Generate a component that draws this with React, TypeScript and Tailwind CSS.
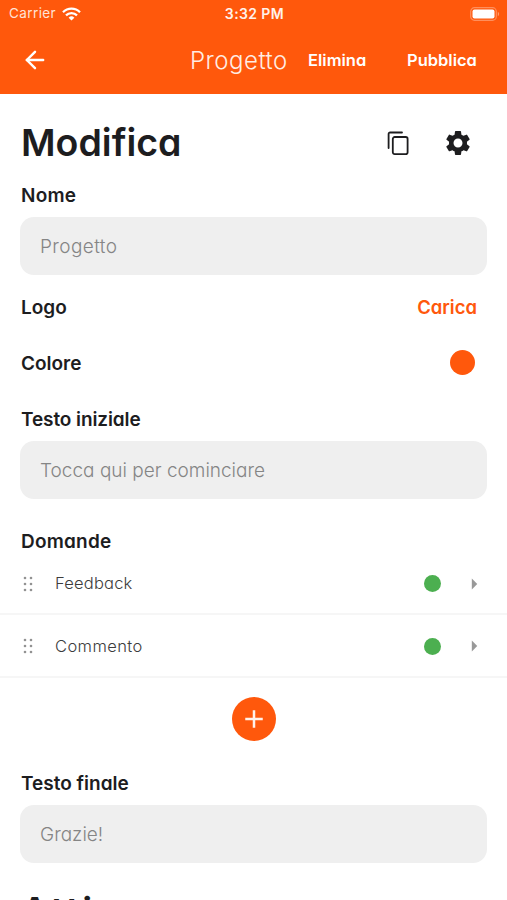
import { ArrowLeft } from 'lucide-react';
import { MdAdd, MdArrowRight, MdSettings } from 'react-icons/md';

interface Question {
  id: number;
  name: string;
  tracking: string;
}

const questions: Question[] = [
  { id: 1, name: 'Feedback', tracking: 'tracking-[0.2px]' },
  { id: 2, name: 'Commento', tracking: 'tracking-[0.4px]' },
];

const StatusBar: React.FC = () => {
  return (
    <div className="grid h-[27px] grid-cols-3 items-center pl-[9px] pr-[7px] text-[13.5px] text-white">
      <div className="flex items-center gap-[6px]">
        <span className="tracking-[0.4px] text-[#ffe3d6] [font-feature-settings:normal]">Carrier</span>
        <svg width="19" height="14" viewBox="0 0 19 14" fill="none" stroke="white" strokeWidth="2.3">
          <path d="M1 5.2a12 12 0 0 1 17 0" />
          <path d="M4 8.4a7.8 7.8 0 0 1 11 0" />
          <path d="M9.5 13.6L6.6 10.7a4.1 4.1 0 0 1 5.8 0z" fill="white" stroke="none" />
        </svg>
      </div>
      <span className="whitespace-nowrap text-center text-[14px] font-semibold tracking-[0.4px] text-[#fff1ea]">3:32 PM</span>
      <svg className="justify-self-end" width="30" height="14" viewBox="0 0 30 14">
        <rect x="0.7" y="0.7" width="25.6" height="12.6" rx="3.8" fill="none" stroke="#ff8f5c" strokeWidth="1.2" />
        <rect x="2.5" y="2.5" width="22" height="9" rx="2" fill="white" />
        <path d="M27.8 4.8c1.8.8 1.8 3.6 0 4.4z" fill="#ff9c6f" />
      </svg>
    </div>
  );
};

const CopyIcon: React.FC = () => {
  return (
    <svg
      className="mr-[34px]"
      width="22"
      height="25"
      viewBox="0 0 22 25"
      fill="none"
      stroke="currentColor"
      strokeWidth="1.8"
      strokeLinecap="round"
      strokeLinejoin="round"
    >
      <path d="M1.6 17V3a1.5 1.5 0 0 1 1.5-1.5H15" />
      <rect x="5.8" y="6" width="14.8" height="17.2" rx="1.9" />
    </svg>
  );
};

const DragHandle: React.FC = () => {
  return (
    <svg width="10" height="16" viewBox="0 0 10 16" fill="#929292">
      {[2, 8, 14].map((y) => (
        <g key={y}>
          <circle cx="2" cy={y} r="1.3" />
          <circle cx="8" cy={y} r="1.3" />
        </g>
      ))}
    </svg>
  );
};

const Field: React.FC<{ children: React.ReactNode }> = ({ children }) => {
  return (
    <div className="mx-5 flex h-[58px] items-center rounded-[14px] bg-[#efefef] px-5 pt-[3px] text-[19px] font-light text-[#858585]">
      {children}
    </div>
  );
};

const App: React.FC = () => {
  return (
    <div className="h-[900px] w-[507px] overflow-hidden bg-white font-['Inter','Open_Sans',sans-serif] text-[#1d1d1f] [font-feature-settings:'cv11']">
      <header className="h-[93.5px] bg-[#ff580c] text-white">
        <StatusBar />
        <div className="flex h-[66px] items-center pl-[21px]">
          <ArrowLeft size={28} strokeWidth={2.1} />
          <h1 className="ml-[141px] w-[98px] whitespace-nowrap pt-[2px] text-[24px] font-light tracking-[0.5px] text-[#ffede4]">Progetto</h1>
          <button className="ml-[20px] w-[59px] whitespace-nowrap text-left text-[16.5px] font-semibold">Elimina</button>
          <button className="ml-[40px] whitespace-nowrap text-[16.5px] font-semibold">Pubblica</button>
        </div>
      </header>

      <main>
        <div className="flex h-[86px] items-center pl-[21px] pr-[34px] pt-[13px]">
          <h2 className="flex-1 text-[37.5px] font-[560]">Modifica</h2>
          <CopyIcon />
          <MdSettings className="size-[30px]" />
        </div>
        <h3 className="flex h-[37px] items-center px-[21px] pb-[4px] text-[19px] font-semibold tracking-[0.2px]">Nome</h3>
        <Field><span className="tracking-[0.4px]">Progetto</span></Field>

        <div className="flex h-[60px] items-center justify-between pl-[21px] pr-[30px] pt-[7px] text-[19px] font-semibold">
          <h3>Logo</h3>
          <button className="text-[18.5px] text-[#ff580c]">Carica</button>
        </div>
        <div className="flex h-[56px] items-center justify-between pl-[21px] pr-8 text-[19px] font-semibold">
          <h3 className="pt-[3px]">Colore</h3>
          <span className="size-[25px] rounded-full bg-[#ff580c]" />
        </div>
        <h3 className="flex h-[50.5px] items-center px-[21px] pt-[8px] text-[19px] font-semibold tracking-[-0.1px]">Testo iniziale</h3>
        <Field>Tocca qui per cominciare</Field>

        <h3 className="flex h-[53.5px] items-end px-[21px] text-[19px] font-semibold leading-[22px] tracking-[0.2px]">Domande</h3>
        <ul>
          {questions.map((question) => (
            <li
              key={question.id}
              className="flex h-[62.5px] items-center border-b-2 border-[#f6f6f6] pl-[23px] pr-[20px] pt-[2px] text-[16.5px] font-light text-[#3c3c3c]"
            >
              <DragHandle />
              <span className={`ml-[22px] flex-1 ${question.tracking}`}>{question.name}</span>
              <span className="mr-[20px] size-[17px] rounded-full bg-[#4caf50]" />
              <MdArrowRight className="size-[26px] text-[#999]" />
            </li>
          ))}
        </ul>
        <div className="flex h-[83px] items-center justify-center">
          <button className="flex size-[44px] items-center justify-center rounded-full bg-[#ff580c] text-[#fff1ea]">
            <MdAdd className="size-[30px]" />
          </button>
        </div>
        <h3 className="flex h-[44px] items-center px-[21px] pt-[3px] text-[19px] font-semibold">Testo finale</h3>
        <Field>Grazie!</Field>
        <h2 className="px-[21px] pt-[20px] text-[38px] font-semibold tracking-[3px]">Atti</h2>
      </main>
    </div>
  );
};

export default App;
